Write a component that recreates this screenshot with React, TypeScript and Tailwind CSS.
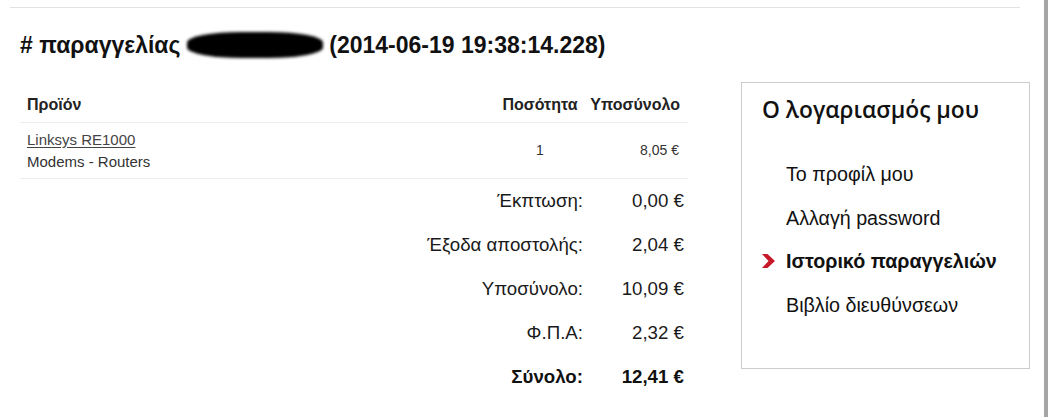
const totals = [
  { label: "Έκπτωση:", value: "0,00 €" },
  { label: "Έξοδα αποστολής:", value: "2,04 €" },
  { label: "Υποσύνολο:", value: "10,09 €" },
  { label: "Φ.Π.Α:", value: "2,32 €" },
];

const menu = [
  { label: "Το προφίλ μου", active: false },
  { label: "Αλλαγή password", active: false },
  { label: "Ιστορικό παραγγελιών", active: true },
  { label: "Βιβλίο διευθύνσεων", active: false },
];

function Chevron() {
  return (
    <svg width="14" height="14" viewBox="0 0 14 14" className="absolute left-[-24px] top-[14px]">
      <polygon points="0,0 5.5,0 13,7 5.5,14 0,14 6.5,7" fill="#c8192b" />
    </svg>
  );
}

export default function App() {
  return (
    <div className="w-[1048px] h-[417px] bg-white overflow-hidden flex text-[#1a1a1a] font-['Liberation_Sans',Arial,sans-serif]">
      <div className="flex-1 pt-[7px]">
        <div className="ml-[10px] w-[1010px] h-px bg-[#e2e2e2]" />

        <div className="flex">
          <div className="ml-[20px] w-[668px]">
            <h1 className="mt-[23px] h-[28px] leading-[28px] text-[23px] font-bold text-[#111] whitespace-nowrap">
              # παραγγελίας{" "}
              <span className="inline-block align-middle w-[136px] h-[26px] bg-black rounded-[40%] blur-[1.5px] -mt-[4px]" />{" "}
              (2014-06-19 19:38:14.228)
            </h1>

            <div className="mt-[29px] h-[35px] flex items-center border-b border-[#ececec] text-[16px] font-bold text-[#222]">
              <div className="w-[477px] pl-[7px]">Προϊόν</div>
              <div className="w-[86px] text-center">Ποσότητα</div>
              <div className="flex-1 text-right pr-[8px]">Υποσύνολο</div>
            </div>

            <div className="h-[56px] flex items-center border-b border-[#ececec] text-[#333]">
              <div className="w-[477px] pl-[7px] text-[15px] leading-[22px]">
                <div className="text-[#444] underline underline-offset-2">Linksys RE1000</div>
                <div>Modems - Routers</div>
              </div>
              <div className="w-[86px] text-center text-[14px]">1</div>
              <div className="flex-1 text-right pr-[9px] text-[14px]">8,05 €</div>
            </div>

            <div className="text-[18.7px]">
              {totals.map((t) => (
                <div key={t.label} className="h-[44px] flex items-center">
                  <div className="w-[563px] text-right">{t.label}</div>
                  <div className="flex-1 text-right pr-[4px]">{t.value}</div>
                </div>
              ))}
              <div className="h-[44px] flex items-center font-bold text-[#111]">
                <div className="w-[563px] text-right">Σύνολο:</div>
                <div className="flex-1 text-right pr-[4px]">12,41 €</div>
              </div>
            </div>
          </div>

          <div className="ml-[53px] mt-[74px] w-[289px] h-[287px] border border-[#cccccc] pl-[20px] pt-[13px]">
            <div className="h-[28px] leading-[28px] text-[22.8px] font-semibold text-[#111] font-['Open_Sans',sans-serif]">
              Ο λογαριασμός μου
            </div>
            <ul className="mt-[29px] pl-[24px]">
              {menu.map((m) => (
                <li
                  key={m.label}
                  className={`relative h-[43.5px] leading-[43.5px] text-[19.7px] text-[#111] ${m.active ? "font-bold" : ""}`}
                >
                  {m.active && <Chevron />}
                  {m.label}
                </li>
              ))}
            </ul>
          </div>
        </div>
      </div>
      <div className="w-[4px] h-full bg-[#a6a6a6]" />
    </div>
  );
}
